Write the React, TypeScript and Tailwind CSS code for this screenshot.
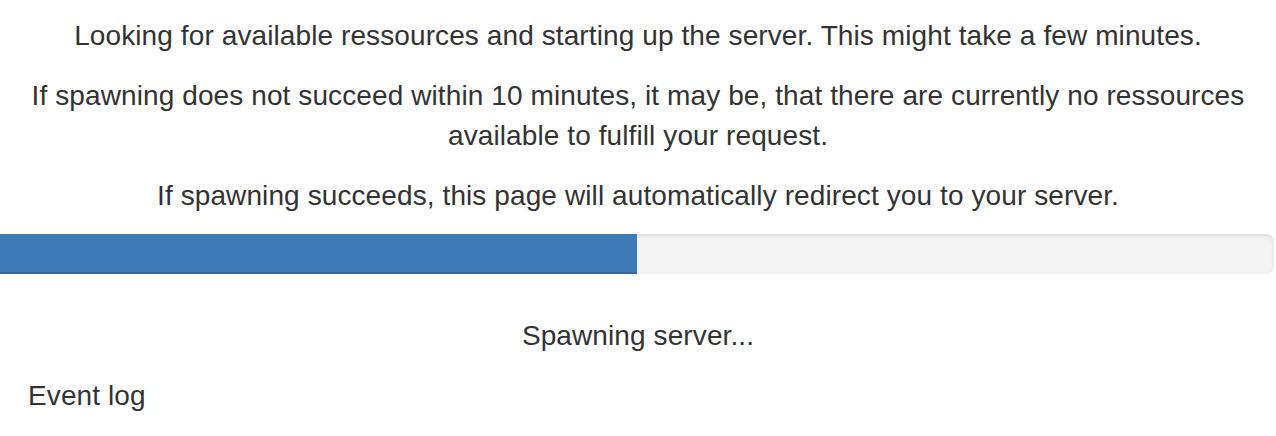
export default function App() {
  const progress = 50;

  return (
    <div className="min-h-screen bg-white text-[#333] text-[28px] leading-[40px] tracking-[0.1px] font-['Liberation_Sans',Arial,sans-serif]">
      <div className="pt-[16px] text-center">
        <p className="mb-[20px]">
          Looking for available ressources and starting up the server. This might take a few minutes.
        </p>
        <p className="mb-[20px] px-[28px]">
          If spawning does not succeed within 10 minutes, it may be, that there are currently no ressources available to fulfill your request.
        </p>
        <p className="mb-[18px]">
          If spawning succeeds, this page will automatically redirect you to your server.
        </p>
      </div>

      {/* progress bar */}
      <div className="mr-[2px] h-[40px] mb-[42px] rounded-r-[8px] bg-[#f4f4f4] shadow-[inset_0_2px_4px_rgba(0,0,0,0.1)] overflow-hidden flex">
        <div
          className="h-full bg-[#3e7ab5] shadow-[inset_0_-2px_0_rgba(0,0,0,0.15)]"
          style={{ width: `${progress}%` }}
        />
      </div>

      <p className="text-center mb-[20px]">Spawning server...</p>

      <div className="pl-[28px]">Event log</div>
    </div>
  );
}
